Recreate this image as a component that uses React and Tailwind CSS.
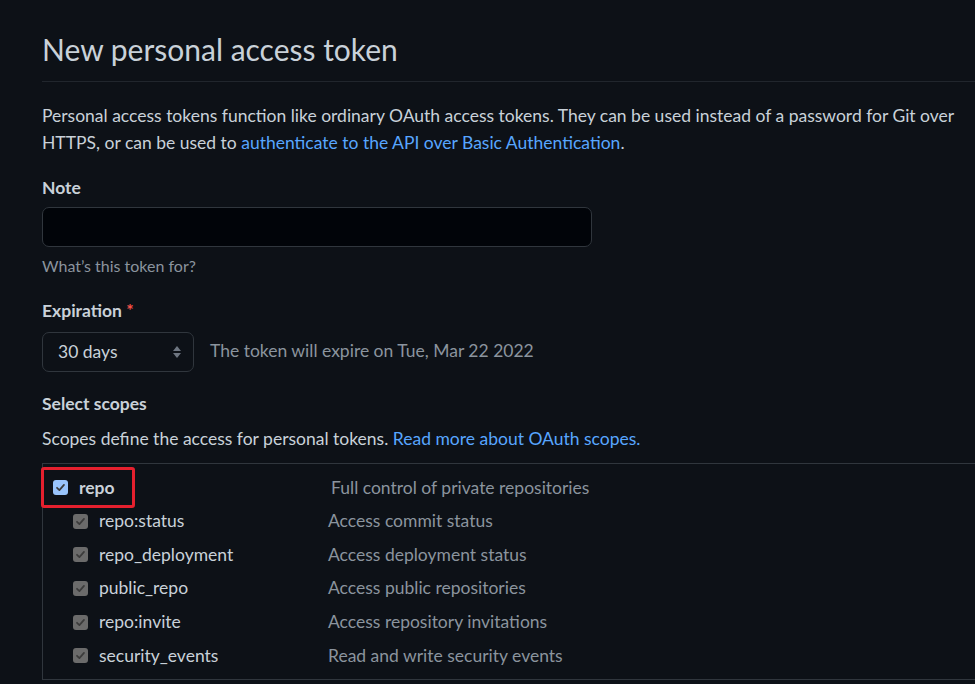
import React from 'react'

const subScopes = [
  { id: 'repo:status', label: 'repo:status', desc: 'Access commit status' },
  { id: 'repo_deployment', label: 'repo_deployment', desc: 'Access deployment status' },
  { id: 'public_repo', label: 'public_repo', desc: 'Access public repositories' },
  { id: 'repo:invite', label: 'repo:invite', desc: 'Access repository invitations' },
  { id: 'security_events', label: 'security_events', desc: 'Read and write security events' },
];

const Check = ({ disabled }) => (
  <span
    className={`flex w-[15px] h-[15px] shrink-0 items-center justify-center rounded-[3px] ${disabled ? "bg-[#6b6b6b]" : "bg-[#99c4fc]"
      }`}
  >
    <svg width="11" height="11" viewBox="0 0 12 12" fill="none">
      <path d="M2.2 6.3 L4.8 8.8 L9.8 3.2" stroke="#3b3b3b" strokeWidth="1.9" strokeLinecap="round" strokeLinejoin="round" />
    </svg>
  </span>
);

const App = () => {
  return (
    <div className="w-[975px] h-[684px] overflow-hidden bg-[#0d1117] text-[#c9d1d9] font-[Lato,sans-serif] pl-[42px]">
      <div className="w-[1000px]">
        {/* heading */}
        <div className="pt-[27px] pb-[9px] border-b border-[#21262d]">
          <h2 className="text-[30px] leading-[45px] font-normal">New personal access token</h2>
        </div>

        <p className="mt-[20px] w-[925px] text-[17.5px] leading-[27px]">
          Personal access tokens function like ordinary OAuth access tokens. They can be used instead of a password for Git over HTTPS, or can be used to{" "}
          <a className="text-[#58a6ff]">authenticate to the API over Basic Authentication</a>.
        </p>

        {/* note */}
        <div className="mt-[19px] text-[17.5px] leading-[26px] font-bold">Note</div>
        <div className="mt-[6px] w-[550px] h-[40px] rounded-[7px] border border-[#30363d] bg-[#010409]" />
        <div className="mt-[7px] text-[16px] leading-[24px] text-[#8b949e]">What’s this token for?</div>

        {/* expiration */}
        <div className="mt-[20px] text-[17.5px] leading-[26px] font-bold">
          Expiration <span className="text-[#f85149]">*</span>
        </div>
        <div className="mt-[8px] flex items-center gap-[16px]">
          <div className="w-[152px] h-[40px] rounded-[7px] border border-[#30363d] bg-[#0d1117] flex items-center justify-between pl-[15px] pr-[11px] text-[17.5px]">
            <span>30 days</span>
            <svg width="10" height="16" viewBox="0 0 10 16">
              <path d="M5 2 L9 7 L1 7 Z" fill="#6e7681" />
              <path d="M5 14 L9 9 L1 9 Z" fill="#6e7681" />
            </svg>
          </div>
          <span className="text-[17.5px] text-[#8b949e] -mt-[1px]">The token will expire on Tue, Mar 22 2022</span>
        </div>

        {/* scopes */}
        <div className="mt-[19px] text-[17.5px] leading-[26px] font-bold">Select scopes</div>
        <p className="mt-[8px] text-[17.5px] leading-[27px]">
          Scopes define the access for personal tokens.{" "}
          <a className="text-[#58a6ff]">Read more about OAuth scopes.</a>
        </p>

        <div className="mt-[11px] border-t border-l border-b border-[#30363d] pt-[7px] pb-[6px] text-[17.5px]">
          <div className="h-[33.6px] flex items-center">
            <div className="w-[290px] shrink-0 -ml-[2px]">
              <div className="w-[94px] h-[41px] border-[3px] border-[#e5202e] rounded-[3px] flex items-center pl-[9px] gap-[11px]">
                <Check />
                <span className="font-bold">repo</span>
              </div>
            </div>
            <span className="text-[#8b949e]">Full control of private repositories</span>
          </div>

          {subScopes.map((s) => (
            <div key={s.id} className="h-[33.6px] flex items-center">
              <div className="w-[285px] shrink-0 pl-[30px] flex items-center gap-[11px]">
                <Check disabled />
                <span>{s.label}</span>
              </div>
              <span className="text-[#8b949e]">{s.desc}</span>
            </div>
          ))}
        </div>
      </div>
    </div>
  );
};

export default App;
